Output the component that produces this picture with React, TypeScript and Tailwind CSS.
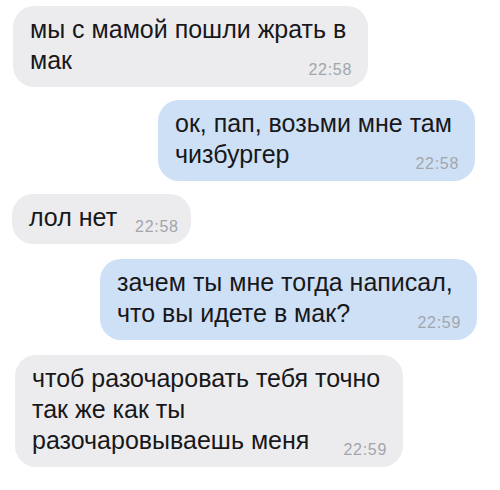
import React from "react";

type Msg = {
  lines: string[];
  time: string;
  out: boolean;
  width: string;
  margin: string;
  gapLast?: string;
};

function Bubble({ m }: { m: Msg }) {
  const last = m.lines[m.lines.length - 1];
  const rest = m.lines.slice(0, -1);
  return (
    <div
      className={
        (m.out ? "self-end bg-[#cee0f6] " : "self-start bg-[#ececee] ") +
        "rounded-[21px] pl-[17px] pr-[16px] pt-[8px] pb-[11px] text-[#18181a] " +
        m.width +
        " " +
        m.margin
      }
    >
      {rest.map((l, i) => (
        <div key={i} className="text-[25px] leading-[31px] whitespace-nowrap">
          {l}
        </div>
      ))}
      <div className={"flex items-end " + (m.gapLast ? m.gapLast : "justify-between")}>
        <span className="text-[25px] leading-[31px] whitespace-nowrap">{last}</span>
        <span className="text-[16px] leading-[12px] tracking-[0.7px] text-[#a2a6ac] whitespace-nowrap">
          {m.time}
        </span>
      </div>
    </div>
  );
}

export default function App() {
  const msgs: Msg[] = [
    {
      lines: ["мы с мамой пошли жрать в", "мак"],
      time: "22:58",
      out: false,
      width: "w-[355px]",
      margin: "ml-[13px] mt-[6px]",
    },
    {
      lines: ["ок, пап, возьми мне там", "чизбургер"],
      time: "22:58",
      out: true,
      width: "w-[317px]",
      margin: "mr-[25px] mt-[13px]",
    },
    {
      lines: ["лол нет"],
      time: "22:58",
      out: false,
      width: "w-[179px]",
      margin: "ml-[12px] mt-[13px]",
      gapLast: "gap-[18px]",
    },
    {
      lines: ["зачем ты мне тогда написал,", "что вы идете в мак?"],
      time: "22:59",
      out: true,
      width: "w-[377px]",
      margin: "mr-[23px] mt-[15px]",
    },
    {
      lines: ["чтоб разочаровать тебя точно", "так же как ты", "разочаровываешь меня"],
      time: "22:59",
      out: false,
      width: "w-[388px]",
      margin: "ml-[15px] mt-[15px]",
    },
  ];
  return (
    <div
      className="w-[500px] h-[490px] bg-white flex flex-col overflow-hidden"
      style={{ fontFamily: '"Liberation Sans", Arial, sans-serif' }}
    >
      {msgs.map((m, i) => (
        <Bubble key={i} m={m} />
      ))}
    </div>
  );
}
